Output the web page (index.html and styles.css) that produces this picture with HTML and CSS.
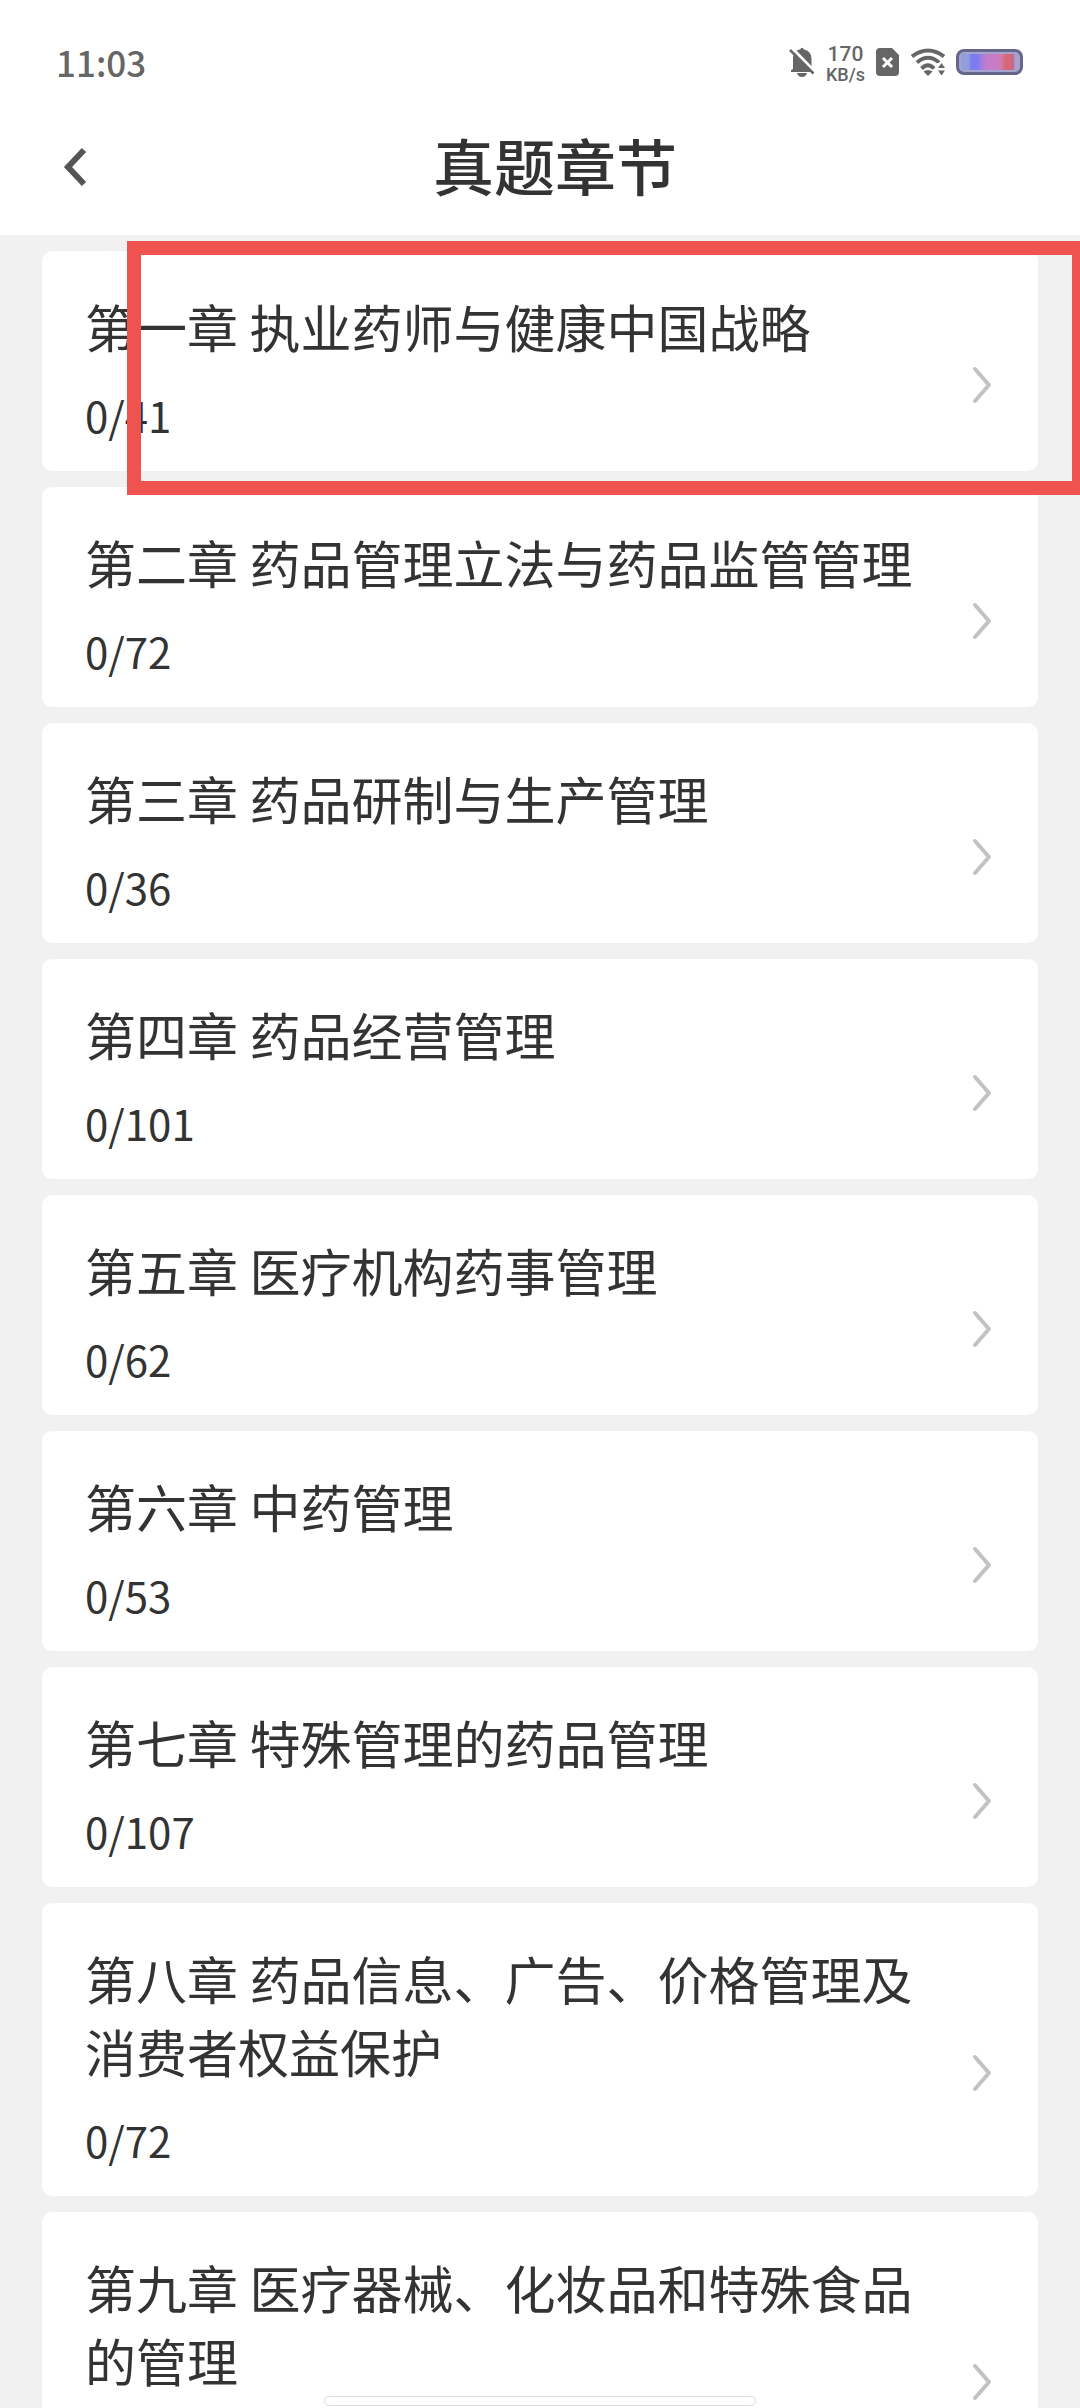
FILE: index.html
```
<!DOCTYPE html>
<html lang="zh-CN">
<head>
  <meta charset="UTF-8">
  <meta name="viewport" content="width=device-width, initial-scale=1.0">
  <title>真题章节</title>
  <link rel="stylesheet" href="styles.css">
</head>
<body>
  <svg class="defs" aria-hidden="true">
    <symbol id="arrow" viewBox="0 0 20 38">
      <path d="M3 3l14 16L3 35" fill="none" stroke="#c2c2c2" stroke-width="4" stroke-linecap="round" stroke-linejoin="round"/>
    </symbol>
  </svg>

  <!-- Status bar -->
  <div class="status-bar">
    <span class="time">11:03</span>
    <div class="status-icons">
      <svg class="bell" width="26" height="30" viewBox="0 0 26 30">
        <path d="M4 22V12C4 5 7 3 11 2.500Q13 -1 15 2.500C20 3.500 22.500 7 22.500 12V20L25 23V25H2V23Z" fill="#666"/>
        <path d="M8 26h10q-1 4-5 4t-5-4z" fill="#666"/>
        <path d="M2 0l24 25" stroke="#fff" stroke-width="3"/>
        <path d="M1 3l23.500 23.500" stroke="#666" stroke-width="2.500"/>
      </svg>
      <span class="speed"><b>170</b><small>KB/s</small></span>
      <svg class="sim" width="24" height="28" viewBox="0 0 24 28">
        <path d="M4 0h12l7 7v17q0 4-4 4H4q-4 0-4-4V4q0-4 4-4z" fill="#666"/>
        <path d="M7 10l9 9M16 10l-9 9" stroke="#fff" stroke-width="3"/>
      </svg>
      <svg class="wifi" width="34" height="28" viewBox="0 0 34 28">
        <g fill="none" stroke="#666" stroke-width="4">
          <path d="M1 8.500Q17-3.500 33 8.500"/>
          <path d="M6 14.500Q17 5 28 14.500"/>
          <path d="M10.500 20.500Q17 14 23 20.500"/>
        </g>
        <path d="M12.500 23.500q4.500-3 9 0L17 28z" fill="#666"/>
        <path d="M25 15h9v13h-9z" fill="#fff"/>
        <path d="M27 20l3.500-5 3.500 5zM27 22.500h7l-3.500 5z" fill="#666"/>
      </svg>
      <span class="battery"></span>
    </div>
  </div>

  <!-- Title bar -->
  <header class="header">
    <button class="back" type="button" aria-label="返回">
      <svg width="30" height="40" viewBox="0 0 30 40">
        <path d="M24 3L8 20l16 17" fill="none" stroke="#555" stroke-width="6"/>
      </svg>
    </button>
    <h1>真题章节</h1>
  </header>

  <!-- Chapter list -->
  <ul class="chapter-list">
    <li class="chapter">
      <a href="#">
        <div class="info">
          <h2>第一章 执业药师与健康中国战略</h2>
          <p>0/41</p>
        </div>
        <svg class="arrow"><use href="#arrow"/></svg>
      </a>
      <span class="highlight"></span>
    </li>
    <li class="chapter">
      <a href="#">
        <div class="info">
          <h2>第二章 药品管理立法与药品监管管理</h2>
          <p>0/72</p>
        </div>
        <svg class="arrow"><use href="#arrow"/></svg>
      </a>
    </li>
    <li class="chapter">
      <a href="#">
        <div class="info">
          <h2>第三章 药品研制与生产管理</h2>
          <p>0/36</p>
        </div>
        <svg class="arrow"><use href="#arrow"/></svg>
      </a>
    </li>
    <li class="chapter">
      <a href="#">
        <div class="info">
          <h2>第四章 药品经营管理</h2>
          <p>0/101</p>
        </div>
        <svg class="arrow"><use href="#arrow"/></svg>
      </a>
    </li>
    <li class="chapter">
      <a href="#">
        <div class="info">
          <h2>第五章 医疗机构药事管理</h2>
          <p>0/62</p>
        </div>
        <svg class="arrow"><use href="#arrow"/></svg>
      </a>
    </li>
    <li class="chapter">
      <a href="#">
        <div class="info">
          <h2>第六章 中药管理</h2>
          <p>0/53</p>
        </div>
        <svg class="arrow"><use href="#arrow"/></svg>
      </a>
    </li>
    <li class="chapter">
      <a href="#">
        <div class="info">
          <h2>第七章 特殊管理的药品管理</h2>
          <p>0/107</p>
        </div>
        <svg class="arrow"><use href="#arrow"/></svg>
      </a>
    </li>
    <li class="chapter">
      <a href="#">
        <div class="info">
          <h2>第八章 药品信息、广告、价格管理及消费者权益保护</h2>
          <p>0/72</p>
        </div>
        <svg class="arrow"><use href="#arrow"/></svg>
      </a>
    </li>
    <li class="chapter">
      <a href="#">
        <div class="info">
          <h2>第九章 医疗器械、化妆品和特殊食品的管理</h2>
          <p></p>
        </div>
        <svg class="arrow"><use href="#arrow"/></svg>
      </a>
    </li>
  </ul>

  <div class="home-bar"></div>
</body>
</html>
```

FILE: styles.css
```
* {
  box-sizing: border-box;
}

body {
  margin: 0;
  height: 100vh;
  display: flex;
  flex-direction: column;
  overflow: hidden;
  position: relative;
  background: #f1f1f1;
  color: #333;
  font-family: "Noto Sans CJK SC", sans-serif;
}

.defs {
  display: none;
}

/* status bar */
.status-bar {
  flex: none;
  height: 98px;
  padding: 26px 57px 0 56px;
  display: flex;
  align-items: center;
  justify-content: space-between;
  background: #fff;
  color: #666;
}

.time {
  font-size: 35px;
  font-weight: 500;
  line-height: 40px;
}

.status-icons {
  display: flex;
  align-items: center;
  gap: 11px;
}

.speed {
  display: flex;
  flex-direction: column;
  align-items: center;
  padding-top: 4px;
  font-family: Roboto, sans-serif;
  font-size: 21px;
  line-height: 22px;
}

.speed b {
  font-weight: 500;
}

.speed small {
  font-size: 18px;
  font-weight: 500;
  line-height: 20px;
}

.battery {
  width: 67px;
  height: 26px;
  border: 3px solid #66668c;
  border-radius: 8px;
  box-shadow: inset 0 0 0 2px #a4a4cc;
  background: linear-gradient(90deg, #91a0dd 0 15%, #7c7cf0 20% 30%, #a07ce0 36%, #c77cca 46% 60%, #d07ba8 70%, #d86878 75% 86%, #b06a90 88%, #aaa0cc 92%);
}

/* title bar */
.header {
  flex: none;
  height: 137px;
  padding: 0 60px;
  display: flex;
  align-items: center;
  background: #fff;
}

.back {
  width: 30px;
  height: 40px;
  padding: 0;
  border: none;
  background: none;
  cursor: pointer;
}

.header h1 {
  flex: 1;
  margin: 0;
  padding-bottom: 4px;
  text-align: center;
  font-size: 61px;
  font-weight: 500;
  line-height: 80px;
}

/* chapters */
.chapter-list {
  flex: 1;
  min-height: 0;
  margin: 0;
  padding: 16px 42px;
  display: flex;
  flex-direction: column;
  gap: 16px;
  list-style: none;
  overflow: hidden auto;
  scrollbar-width: none;
}

.chapter {
  flex: none;
  position: relative;
}

.chapter a {
  display: flex;
  align-items: center;
  gap: 40px;
  padding: 39px 46px 0 43px;
  border-radius: 10px;
  background: #fff;
  color: inherit;
  text-decoration: none;
}

.info {
  flex: 1;
  padding-bottom: 27px;
}

.info h2 {
  margin: 0 0 23px;
  font-size: 51px;
  font-weight: 400;
  line-height: 73px;
}

.info p {
  margin: 0;
  min-height: 58px;
  font-size: 42px;
  line-height: 58px;
}

.arrow {
  flex: none;
  width: 20px;
  height: 38px;
  margin-top: 8px;
}

/* red frame over the first chapter */
.highlight {
  position: absolute;
  z-index: 1;
  top: -10px;
  right: -42px;
  bottom: -24px;
  left: 85px;
  border: 14px solid #ef534f;
  border-right-width: 8px;
  pointer-events: none;
}

.home-bar {
  position: absolute;
  bottom: 2px;
  left: 50%;
  width: 40%;
  height: 10px;
  transform: translateX(-50%);
  border: 1px solid #dcdce0;
  border-radius: 5px;
  background: #fff;
}
```
